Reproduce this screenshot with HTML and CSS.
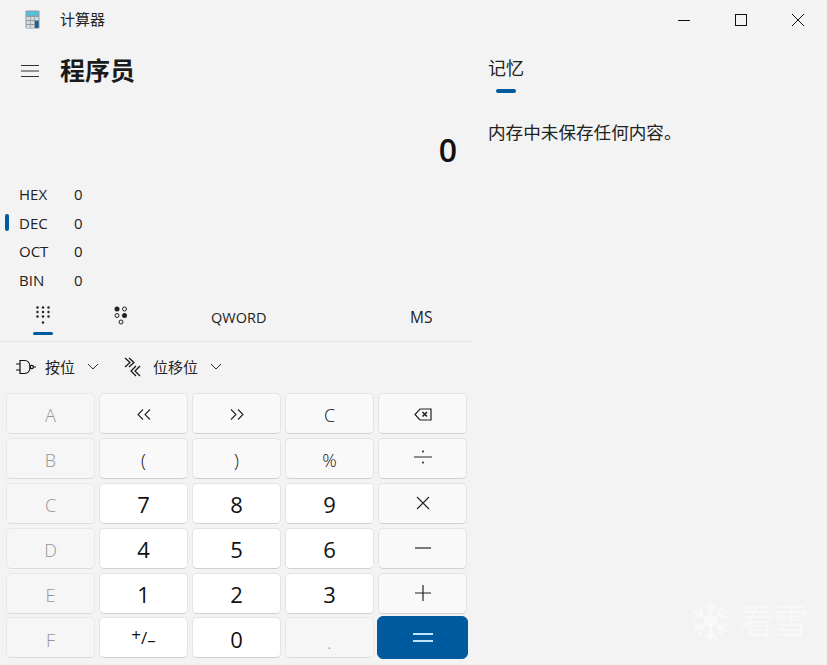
FILE: index.html
```html
<!DOCTYPE html>
<html lang="zh">
<head>
<meta charset="utf-8">
<title>计算器</title>
<link rel="stylesheet" href="styles.css">
</head>
<body>
<div class="app">
  <header class="titlebar">
    <div class="title-left">
      <svg class="app-icon" width="16" height="20" viewBox="0 0 16 20">
        <rect x="0.5" y="0.5" width="14" height="18" rx="1" fill="#8f9aa3"/>
        <rect x="1.5" y="1.5" width="12" height="4" fill="#4fc3e0"/>
        <g fill="#d5dadd">
          <rect x="1.5" y="7" width="3.5" height="3"/><rect x="5.7" y="7" width="3.5" height="3"/>
          <rect x="1.5" y="11" width="3.5" height="3"/><rect x="5.7" y="11" width="3.5" height="3"/>
          <rect x="1.5" y="15" width="3.5" height="3"/><rect x="5.7" y="15" width="3.5" height="3"/>
          <rect x="10" y="7" width="3.5" height="3"/>
        </g>
        <rect x="10" y="11" width="3.5" height="7" fill="#1c5f96"/>
      </svg>
      <span class="app-name">计算器</span>
    </div>
    <div class="win-controls">
      <svg width="14" height="14" viewBox="0 0 14 14"><path d="M1 7.5H13" stroke="#111" fill="none"/></svg>
      <svg width="14" height="14" viewBox="0 0 14 14"><rect x="1.5" y="1.5" width="11" height="11" stroke="#111" fill="none"/></svg>
      <svg width="14" height="14" viewBox="0 0 14 14"><path d="M1 1L13 13M13 1L1 13" stroke="#111" fill="none"/></svg>
    </div>
  </header>
  <div class="columns">
    <main class="calc">
      <div class="mode-bar">
        <svg class="menu-icon" width="20" height="14" viewBox="0 0 20 14"><path d="M1 1.5H19M1 7H19M1 12.5H19" stroke="#333" stroke-width="1.2" fill="none"/></svg>
        <h1 class="mode-title">程序员</h1>
      </div>
      <div class="display">0</div>
      <ul class="radix-list">
        <li class="radix"><span class="radix-name">HEX</span><span>0</span></li>
        <li class="radix radix-active"><span class="radix-name">DEC</span><span>0</span></li>
        <li class="radix"><span class="radix-name">OCT</span><span>0</span></li>
        <li class="radix"><span class="radix-name">BIN</span><span>0</span></li>
      </ul>
      <nav class="tabs">
        <div class="tab tab-keypad">
          <svg width="14" height="19" viewBox="0 0 14 19" fill="#222">
            <circle cx="1.5" cy="1.5" r="1.2"/><circle cx="7" cy="1.5" r="1.2"/><circle cx="12.5" cy="1.5" r="1.2"/>
            <circle cx="1.5" cy="6" r="1.2"/><circle cx="7" cy="6" r="1.2"/><circle cx="12.5" cy="6" r="1.2"/>
            <circle cx="1.5" cy="10.5" r="1.2"/><circle cx="7" cy="10.5" r="1.2"/><circle cx="12.5" cy="10.5" r="1.2"/>
            <circle cx="7" cy="16.5" r="1.2"/>
          </svg>
        </div>
        <div class="tab tab-bits">
          <svg width="15" height="19" viewBox="0 0 15 19">
            <circle cx="3" cy="3" r="2.5" fill="#222"/><circle cx="10.5" cy="3" r="2" fill="none" stroke="#222"/>
            <circle cx="3" cy="9.5" r="2" fill="none" stroke="#222"/><circle cx="10.5" cy="9.5" r="2.5" fill="#222"/>
            <circle cx="7" cy="16" r="2" fill="none" stroke="#222"/>
          </svg>
        </div>
        <div class="tab tab-word">QWORD</div>
        <div class="tab tab-ms">MS</div>
      </nav>
      <div class="toolbar">
        <div class="tool tool-bit">
          <svg width="21" height="16" viewBox="0 0 21 16" fill="none" stroke="#111" stroke-width="1.2">
            <path d="M5 1.5H9.5C13 1.5 15 4.5 15 8S13 14.5 9.5 14.5H5ZM1 5H5M1 11H5M18.4 8H21"/>
            <circle cx="16.8" cy="8" r="1.6"/>
          </svg>
          <span>按位</span>
          <svg class="chev" width="12" height="7" viewBox="0 0 12 7"><path d="M1 1L6 6L11 1" stroke="#333" fill="none"/></svg>
        </div>
        <div class="tool tool-shift">
          <svg width="17" height="20" viewBox="0 0 17 20" fill="none" stroke="#111" stroke-width="1.2">
            <path d="M1 1L6 5.5L1 10M5 1L10 5.5L5 10M12 9L7 14L12 19M16 9L11 14L16 19"/>
          </svg>
          <span>位移位</span>
          <svg class="chev" width="12" height="7" viewBox="0 0 12 7"><path d="M1 1L6 6L11 1" stroke="#333" fill="none"/></svg>
        </div>
      </div>
      <div class="keypad">
        <button class="key key-off">A</button>
        <button class="key key-op">
          <svg class="key-shift-icon" width="14" height="11" viewBox="0 0 14 11" fill="none" stroke="#222" stroke-width="1.1"><path d="M6 0.5L1 5.5L6 10.5M13 0.5L8 5.5L13 10.5"/></svg>
        </button>
        <button class="key key-op">
          <svg class="key-shift-icon" width="14" height="11" viewBox="0 0 14 11" fill="none" stroke="#222" stroke-width="1.1"><path d="M1 0.5L6 5.5L1 10.5M8 0.5L13 5.5L8 10.5"/></svg>
        </button>
        <button class="key key-op">C</button>
        <button class="key key-op">
          <svg class="key-shift-icon" width="18" height="13" viewBox="0 0 18 13" fill="none" stroke="#222" stroke-width="1.2"><path d="M6 1H17V12H6L1 6.5Z"/><path d="M8.5 4L13 8.5M13 4L8.5 8.5" stroke-width="1.6"/></svg>
        </button>
        <button class="key key-off">B</button>
        <button class="key key-op">(</button>
        <button class="key key-op">)</button>
        <button class="key key-op">%</button>
        <button class="key key-op">
          <svg class="key-divide" width="18" height="14" viewBox="0 0 18 14" fill="#222"><path d="M0 6.5H18V7.5H0Z"/><circle cx="9" cy="1.5" r="1"/><circle cx="9" cy="12.5" r="1"/></svg>
        </button>
        <button class="key key-off">C</button>
        <button class="key key-num">7</button>
        <button class="key key-num">8</button>
        <button class="key key-num">9</button>
        <button class="key key-op">
          <svg class="key-symbol" width="14" height="14" viewBox="0 0 14 14"><path d="M1 1L13 13M13 1L1 13" stroke="#222" stroke-width="1.1" fill="none"/></svg>
        </button>
        <button class="key key-off">D</button>
        <button class="key key-num">4</button>
        <button class="key key-num">5</button>
        <button class="key key-num">6</button>
        <button class="key key-op">
          <svg class="key-symbol" width="16" height="2" viewBox="0 0 16 2"><path d="M0 1H16" stroke="#222" stroke-width="1.2"/></svg>
        </button>
        <button class="key key-off">E</button>
        <button class="key key-num">1</button>
        <button class="key key-num">2</button>
        <button class="key key-num">3</button>
        <button class="key key-op">
          <svg class="key-symbol" width="16" height="16" viewBox="0 0 16 16"><path d="M0 8H16M8 0V16" stroke="#222" stroke-width="1.2"/></svg>
        </button>
        <button class="key key-off">F</button>
        <button class="key key-num key-sign"><sup>+</sup>/<sub>–</sub></button>
        <button class="key key-num">0</button>
        <button class="key key-off key-dot">.</button>
        <button class="key key-equals">
          <svg width="20" height="9" viewBox="0 0 20 9"><path d="M0 1H20M0 8H20" stroke="#bfe6fb" stroke-width="2"/></svg>
        </button>
      </div>
    </main>
    <aside class="memory">
      <div class="memory-tab">
        <span class="memory-title">记忆</span>
        <span class="memory-bar"></span>
      </div>
      <p class="memory-empty">内存中未保存任何内容。</p>
      <div class="watermark">
        <svg width="37" height="42" viewBox="0 0 37 42" fill="none" stroke="#f9f9f9" stroke-width="2.4">
          <path d="M18.5 1V41M2 11L35 31M35 11L2 31"/>
          <path d="M13 4L18.5 10L24 4M13 38L18.5 32L24 38M2 18L10 15L8 7M35 18L27 15L29 7M2 24L10 27L8 35M35 24L27 27L29 35"/>
          <circle cx="18.5" cy="21" r="5"/>
        </svg>
        <span class="watermark-text">看雪</span>
      </div>
    </aside>
  </div>
</div>
</body>
</html>
```
FILE: styles.css
```css
* { box-sizing: border-box; }
html, body { margin: 0; padding: 0; }
body {
  width: 827px;
  height: 665px;
  overflow: hidden;
  background: #f3f3f3;
  color: #1b1b1b;
  font-family: "Open Sans", "Noto Sans CJK SC", sans-serif;
}
.app { display: flex; flex-direction: column; height: 665px; }

.titlebar {
  display: flex;
  justify-content: space-between;
  align-items: center;
  height: 40px;
  flex: none;
}
.title-left { display: flex; align-items: center; padding-left: 25px; }
.app-name { margin-left: 19px; font-size: 15px; line-height: 18px; margin-top: -2px; color: #222; }
.win-controls { display: flex; gap: 43px; padding-right: 22px; }
.win-controls svg { display: block; }

.columns { display: flex; flex: 1; min-height: 0; }
.calc { width: 473px; flex: none; }

.mode-bar { display: flex; align-items: center; height: 42px; padding-left: 20px; margin-top: 9px; }
.menu-icon { display: block; margin-top: 2px; }
.mode-title { margin: 0 0 0 20px; font-size: 25px; font-weight: 700; line-height: 42px; color: #1a1a1a; }

.display {
  height: 48px;
  margin-top: 35px;
  padding-right: 16px;
  text-align: right;
  font-size: 32px;
  font-weight: 600;
  line-height: 48px;
  color: #111;
}
.radix-list { list-style: none; margin: 6px 0 0; padding: 0; }
.radix {
  position: relative;
  display: flex;
  align-items: center;
  height: 28.6px;
  padding-left: 19px;
  font-size: 15px;
  color: #222;
}
.radix-name { width: 55px; }
.radix-active::before {
  content: "";
  position: absolute;
  left: 5px;
  top: 5px;
  width: 4px;
  height: 17px;
  border-radius: 2px;
  background: #005a9e;
}

.tabs {
  position: relative;
  display: flex;
  align-items: center;
  height: 46px;
  margin-top: 1.4px;
  border-bottom: 1px solid #e5e5e5;
  font-size: 14.5px;
  color: #222;
}
.tab { position: absolute; line-height: 19px; }
.tab svg { display: block; }
.tab-keypad { left: 36px; top: 10px; }
.tab-keypad::after {
  content: "";
  position: absolute;
  left: -3px;
  top: 26px;
  width: 20px;
  height: 3px;
  border-radius: 2px;
  background: #005a9e;
}
.tab-bits { left: 114px; top: 10px; }
.tab-word { left: 211px; top: 12px; }
.tab-ms { left: 410px; top: 12px; font-size: 15.5px; }

.toolbar { display: flex; height: 50px; align-items: center; padding-left: 15px; font-size: 15px; color: #222; }
.tool { display: flex; align-items: center; }
.tool-bit { width: 109px; }
.tool-bit span { margin-left: 9px; }
.tool-shift span { margin-left: 12px; }
.chev { margin-left: 12px; }

.keypad {
  display: grid;
  grid-template-columns: repeat(5, 89px);
  grid-auto-rows: 41px;
  gap: 4px;
  padding-left: 6px;
  margin-top: 1px;
  row-gap: 3.95px;
}
.key {
  display: flex;
  align-items: center;
  justify-content: center;
  padding: 0;
  font-family: inherit;
  border: 1px solid #e4e4e4;
  border-bottom-color: #cfcfcf;
  border-radius: 5px;
  color: #111;
}
.key-off { background: #f6f6f6; color: #959595; font-size: 18px; font-weight: 300; padding-top: 4px; border-color: #e8e8e8; border-bottom-color: #dcdcdc; }
.key-op { background: #f9f9f9; font-size: 18px; font-weight: 300; padding-top: 4px; }
.key-num { background: #fff; font-size: 22px; padding-top: 2px; }
.key-equals { background: #005a9e; border-color: #005a9e; border-radius: 6px; margin: -1px; }
.key-shift-icon { position: relative; top: -1px; }
.key-symbol { position: relative; top: -2px; }
.key-divide { position: relative; top: -3px; }
.key-sign { font-size: 17px; line-height: 1; font-weight: 400; padding-top: 0; }
.key-sign sup { font-size: 17px; position: relative; top: -3px; vertical-align: baseline; line-height: 1; }
.key-sign sub { font-size: 17px; position: relative; top: 2px; vertical-align: baseline; line-height: 1; }
.key-dot { align-items: flex-end; padding-bottom: 3px; }

.memory { position: relative; flex: 1; padding-left: 15px; }
.memory-tab { display: flex; flex-direction: column; margin-top: 14px; width: 36px; }
.memory-title { font-size: 18px; line-height: 28px; color: #222; }
.memory-bar { width: 20px; height: 4px; margin: 7px 0 0 8px; border-radius: 2px; background: #005a9e; }
.memory-empty { margin: 27px 0 0; font-size: 17.6px; line-height: 24px; color: #222; }

.watermark {
  position: absolute;
  right: 19px;
  bottom: 23px;
  display: flex;
  align-items: center;
  gap: 11px;
}
.watermark-text { font-size: 34px; line-height: 42px; color: #f8f8f8; }
```
